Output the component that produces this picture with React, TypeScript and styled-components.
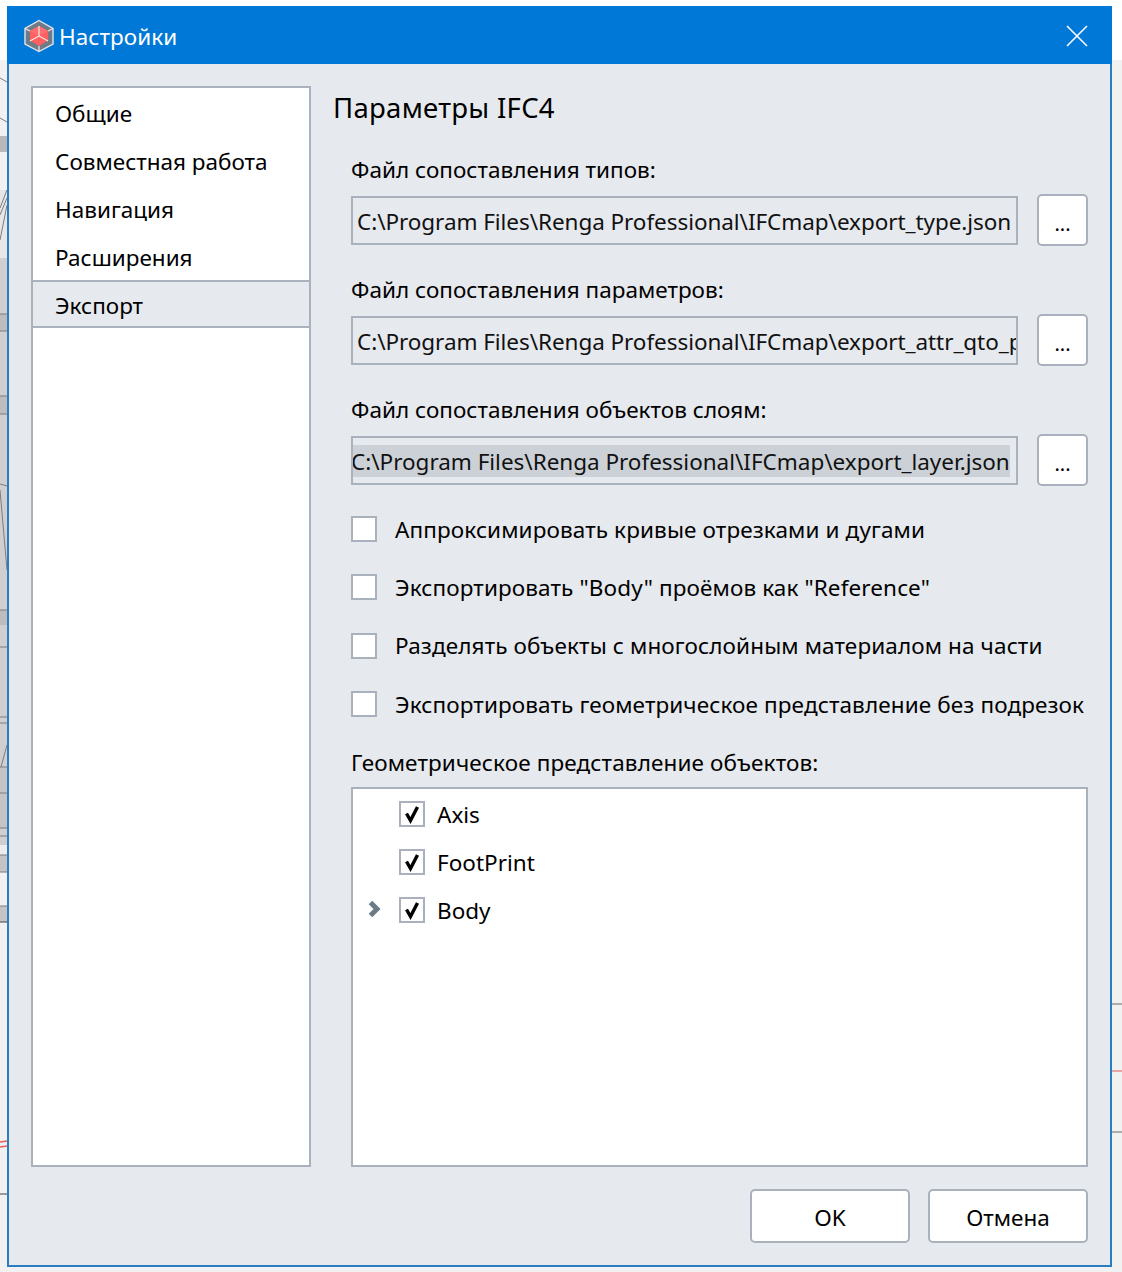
import React from 'react';
import styled, { createGlobalStyle } from 'styled-components';

const GlobalStyle = createGlobalStyle`
  html, body {
    margin: 0;
    padding: 0;
    height: 1272px;
    overflow: hidden;
    background: #f1f1f1;
    font-family: "Noto Sans", "Open Sans", sans-serif;
    color: #000;
  }
`;

const Desktop = styled.div`
  position: relative;
  width: 1122px;
  height: 1272px;
  padding: 6px 10px 5px 7px;
  box-sizing: border-box;
  display: flex;
  background: linear-gradient(#fff 0 60px, #f1f1f1 60px);
`;

const Backdrop = styled.svg`
  position: absolute;
  left: 0;
  top: 0;
`;

const Window = styled.div`
  position: relative;
  flex: 1;
  min-width: 0;
  box-sizing: border-box;
  display: flex;
  flex-direction: column;
  border: 2px solid #2b7dc3;
  border-top: 0;
  background: #e6e9ed;
`;

const TitleBar = styled.div`
  height: 58px;
  margin: 0 -2px;
  flex: none;
  display: flex;
  align-items: center;
  padding: 2px 24px 0 16px;
  box-sizing: border-box;
  background: #0078d7;
  color: #fff;
`;

const Title = styled.div`
  flex: 1;
  margin-left: 4px;
  font-size: 22.5px;
  letter-spacing: 0.05px;
`;

const Body = styled.div`
  flex: 1;
  min-height: 0;
  display: flex;
  padding: 22px;
  gap: 23px;
`;

const Sidebar = styled.div`
  width: 280px;
  flex: none;
  box-sizing: border-box;
  border: 2px solid #a9b2bc;
  background: #fff;
  margin-bottom: 76px;
`;

const NavItem = styled.div<{ $active?: boolean }>`
  height: 48px;
  box-sizing: border-box;
  padding: 2px 0 0 22px;
  display: flex;
  align-items: center;
  font-size: 22.5px;
  background: ${p => (p.$active ? '#e6e9ed' : 'transparent')};
  border-top: ${p => (p.$active ? '2px solid #a9b2bc' : '0')};
  border-bottom: ${p => (p.$active ? '2px solid #a9b2bc' : '0')};
`;

const Main = styled.div`
  flex: 1;
  min-width: 0;
  display: flex;
  flex-direction: column;
`;

const Heading = styled.div`
  height: 44px;
  margin-left: -1px;
  font-size: 27.5px;
  line-height: 44px;
  letter-spacing: 0.3px;
`;

const Form = styled.div`
  flex: 1;
  min-height: 0;
  display: flex;
  flex-direction: column;
  padding-left: 17px;
  margin-top: -4px;
`;

const FieldLabel = styled.div`
  height: 30px;
  margin-top: 29px;
  font-size: 22.5px;
  line-height: 30px;
  letter-spacing: 0.02px;
`;

const FieldRow = styled.div`
  height: 52px;
  margin-top: 9px;
  display: flex;
  align-items: center;
  gap: 19px;
`;

const PathBox = styled.div<{ $scrolled?: boolean }>`
  width: 667px;
  height: 49px;
  margin-top: 1px;
  flex: none;
  box-sizing: border-box;
  border: 2px solid #a9b2bc;
  padding: ${p => (p.$scrolled ? '0' : '2px 0 0 4px')};
  display: flex;
  align-items: center;
  overflow: hidden;
  font-size: 22.5px;
  color: #111;
  letter-spacing: ${p => (p.$scrolled ? '-0.02px' : '-0.06px')};
  white-space: nowrap;
`;

const SelectedText = styled.span`
  display: block;
  padding-top: 2px;
  line-height: 30px;
  width: 657px;
  text-indent: -2px;
  background: #ccd1d7;
`;

const BrowseButton = styled.div`
  width: 51px;
  height: 52px;
  flex: none;
  box-sizing: border-box;
  border: 2px solid #a9b2bc;
  border-radius: 5px;
  background: #fff;
  display: flex;
  align-items: center;
  justify-content: center;
  padding-top: 6px;
  font-size: 20px;
`;

const Options = styled.div`
  display: flex;
  flex-direction: column;
  margin-top: 14px;
`;

const OptionRow = styled.div`
  height: 58.3px;
  display: flex;
  align-items: center;
  gap: 18px;
  font-size: 22.5px;
  letter-spacing: 0.12px;
  white-space: nowrap;
`;

const Box = styled.div`
  width: 26px;
  height: 26px;
  flex: none;
  box-sizing: border-box;
  border: 2px solid #a9b2bc;
  background: #fff;
  display: flex;
  align-items: center;
  justify-content: center;
`;

const TreeLabel = styled(FieldLabel)`
  margin-top: 15px;
  letter-spacing: 0.13px;
`;

const Tree = styled.div`
  height: 380px;
  margin-top: 9px;
  box-sizing: border-box;
  border: 2px solid #a9b2bc;
  background: #fff;
  padding-top: 1px;
`;

const TreeRow = styled.div`
  position: relative;
  height: 48px;
  display: flex;
  align-items: center;
  gap: 12px;
  padding-left: 46px;
  font-size: 22.5px;
`;

const Expander = styled.svg`
  position: absolute;
  left: 15px;
  top: 14px;
`;

const Footer = styled.div`
  display: flex;
  justify-content: flex-end;
  gap: 18px;
  margin-top: 22px;
`;

const DialogButton = styled.div`
  width: 160px;
  height: 54px;
  box-sizing: border-box;
  border: 2px solid #a9b2bc;
  border-radius: 5px;
  background: #fff;
  display: flex;
  align-items: center;
  justify-content: center;
  padding-top: 3px;
  font-size: 22.5px;
`;

const Logo = () => (
  <svg width="32" height="34" viewBox="0 0 32 34">
    <path d="M16 1.5 L30 9.5 V25 L16 32.5 L2 25 V9.5 Z" fill="#6f7c87" stroke="#dfe6ec" strokeWidth="1.4" />
    <path d="M16 7 L25 12 V21.5 L16 27 L7 21.5 V12 Z" fill="#ff5f5f" />
    <path d="M16 7 L25 12 L16 17 L7 12 Z" fill="#ff6f6f" />
    <path d="M16 17 V7 M16 17 L7 22 M16 17 L25 22 M2 9.5 L7 12 M30 9.5 L25 12 M16 27 V32.5" stroke="#f6e4e4" strokeWidth="1.2" fill="none" />
  </svg>
);

const CloseIcon = () => (
  <svg width="22" height="22" viewBox="0 0 22 22">
    <path d="M1 1 L21 21 M21 1 L1 21" stroke="#fff" strokeWidth="1.6" fill="none" />
  </svg>
);

const Check = () => (
  <svg width="20" height="20" viewBox="0 0 20 20">
    <path d="M4.5 9.5 L8.5 16.5 L15.5 3" stroke="#000" strokeWidth="3.4" fill="none" />
  </svg>
);

const options = [
  'Аппроксимировать кривые отрезками и дугами',
  'Экспортировать "Body" проёмов как "Reference"',
  'Разделять объекты с многослойным материалом на части',
  'Экспортировать геометрическое представление без подрезок',
];

const App: React.FC = () => (
  <Desktop>
    <GlobalStyle />
    <Backdrop width="1122" height="1272" viewBox="0 0 1122 1272">
      <rect x="0" y="190" width="7" height="68" fill="#e6e6e6" />
      <rect x="0" y="258" width="7" height="352" fill="#cfcfcf" />
      <rect x="0" y="136" width="7" height="16" fill="#b9b9b9" />
      <rect x="0" y="314" width="7" height="17" fill="#bdbdbd" />
      <rect x="0" y="396" width="7" height="18" fill="#bdbdbd" />
      <rect x="0" y="610" width="7" height="15" fill="#bdbdbd" />
      <rect x="0" y="625" width="7" height="220" fill="#cfcfcf" />
      <rect x="0" y="767" width="7" height="61" fill="#c4c4c4" />
      <rect x="0" y="845" width="7" height="10" fill="#ededed" />
      <rect x="0" y="855" width="7" height="17" fill="#c4c4c4" />
      <rect x="0" y="906" width="7" height="16" fill="#c4c4c4" />
      <path d="M0 78 L7 82 M0 118 L7 122 M0 208 L7 190 M0 215 L7 198 M0 240 L7 205 M0 314 H7 M0 331 H7 M0 396 H7 M0 414 H7 M0 484 L7 486 M0 490 L7 570 M0 610 H7 M0 647 H7 M0 717 H7 M0 723 H7 M0 767 H7 M1 767 L7 745 M0 793 H7 M0 828 H7 M0 836 H7 M0 855 H7 M0 872 H7 M0 906 H7" stroke="#7d7d7d" strokeWidth="1" />
      <path d="M0 922 H7 M0 1194 H7" stroke="#444" strokeWidth="1" />
      <path d="M0 1142 L7 1141 M0 1147 L7 1146" stroke="#f25c5c" strokeWidth="1.4" />
      <path d="M1112 1004 H1122 M1112 1132 H1122" stroke="#666" strokeWidth="1" />
      <path d="M1112 1071 H1122" stroke="#e05a5a" strokeWidth="1" />
    </Backdrop>
    <Window>
      <TitleBar>
        <Logo />
        <Title>Настройки</Title>
        <CloseIcon />
      </TitleBar>
      <Body>
        <Sidebar>
          <NavItem>Общие</NavItem>
          <NavItem>Совместная работа</NavItem>
          <NavItem>Навигация</NavItem>
          <NavItem>Расширения</NavItem>
          <NavItem $active>Экспорт</NavItem>
        </Sidebar>
        <Main>
          <Heading>Параметры IFC4</Heading>
          <Form>
            <FieldLabel>Файл сопоставления типов:</FieldLabel>
            <FieldRow>
              <PathBox>C:\Program Files\Renga Professional\IFCmap\export_type.json</PathBox>
              <BrowseButton>...</BrowseButton>
            </FieldRow>
            <FieldLabel>Файл сопоставления параметров:</FieldLabel>
            <FieldRow>
              <PathBox>C:\Program Files\Renga Professional\IFCmap\export_attr_qto_pset.json</PathBox>
              <BrowseButton>...</BrowseButton>
            </FieldRow>
            <FieldLabel>Файл сопоставления объектов слоям:</FieldLabel>
            <FieldRow>
              <PathBox $scrolled>
                <SelectedText>C:\Program Files\Renga Professional\IFCmap\export_layer.json</SelectedText>
              </PathBox>
              <BrowseButton>...</BrowseButton>
            </FieldRow>
            <Options>
              {options.map(text => (
                <OptionRow key={text}>
                  <Box />
                  {text}
                </OptionRow>
              ))}
            </Options>
            <TreeLabel>Геометрическое представление объектов:</TreeLabel>
            <Tree>
              {['Axis', 'FootPrint', 'Body'].map(name => (
                <TreeRow key={name}>
                  {name === 'Body' && (
                    <Expander width="14" height="18" viewBox="0 0 14 18">
                      <path d="M2.5 2.5 L9 9 L2.5 15.5" stroke="#6d7a88" strokeWidth="5" fill="none" />
                    </Expander>
                  )}
                  <Box>
                    <Check />
                  </Box>
                  {name}
                </TreeRow>
              ))}
            </Tree>
            <Footer>
              <DialogButton>OK</DialogButton>
              <DialogButton>Отмена</DialogButton>
            </Footer>
          </Form>
        </Main>
      </Body>
    </Window>
  </Desktop>
);

export default App;
